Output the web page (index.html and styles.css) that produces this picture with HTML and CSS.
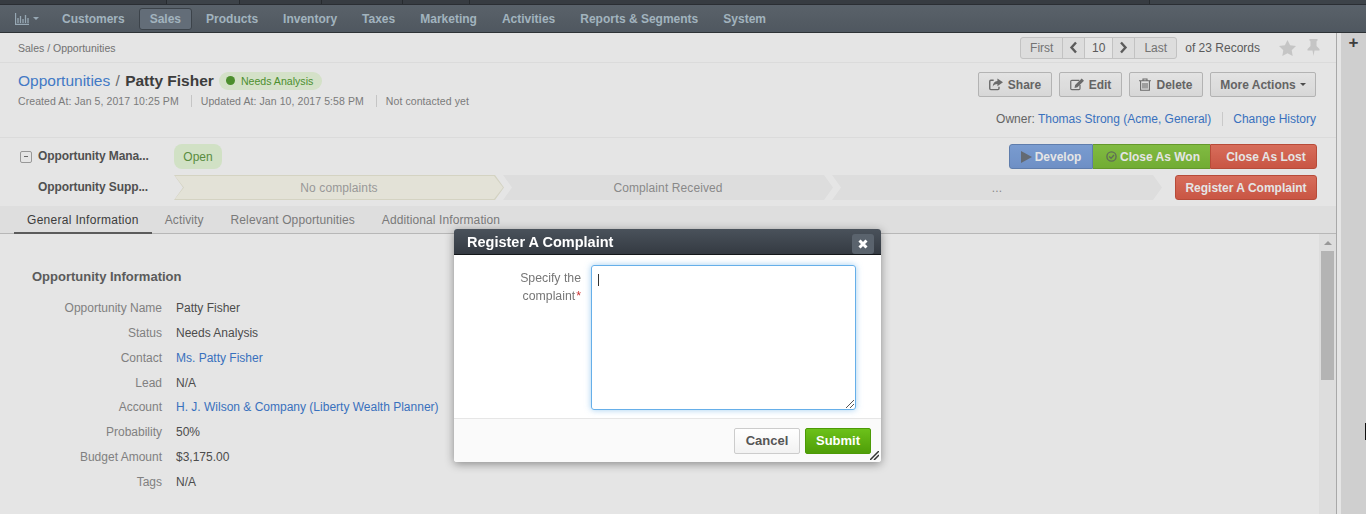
FILE: index.html
```html
<!DOCTYPE html>
<html lang="en">
  <head>
    <meta charset="UTF-8" />
    <title>Opportunities - Patty Fisher</title>
    <link rel="stylesheet" href="styles.css">
  </head>
  <body>
    <div class="tabstrip">
      <span class="strip-tab s1"></span><span class="strip-tab s2"></span><span class="strip-tab s3"></span><span class="strip-tab s4"></span><span class="strip-tab s5"></span><span class="strip-tab s6"></span>
    </div>
    <nav class="topnav">
      <a class="nav-chart">
        <svg width="14" height="12" viewBox="0 0 14 12"><path d="M.5 0v11.500H14M3 5v5M5.500 3v7M8 6v4M10.500 2v8M13 5v5" fill="none" stroke="#a9bcc9" stroke-width="1.300"/></svg>
        <i class="caret"></i>
      </a>
      <a class="nav-item">Customers</a>
      <a class="nav-item active">Sales</a>
      <a class="nav-item">Products</a>
      <a class="nav-item">Inventory</a>
      <a class="nav-item">Taxes</a>
      <a class="nav-item">Marketing</a>
      <a class="nav-item">Activities</a>
      <a class="nav-item">Reports &amp; Segments</a>
      <a class="nav-item">System</a>
    </nav>
    <div class="layout">
      <main class="content">
        <div class="crumbbar">
          <div class="crumbs">Sales / Opportunities</div>
          <div class="pager">
            <div class="pager-group">
              <span class="pg pg-text">First</span>
              <span class="pg pg-icon"><svg width="9" height="13" viewBox="0 0 9 13"><path d="M7 1.500 2.500 6.500 7 11.500" fill="none" stroke="#666" stroke-width="2.400"/></svg></span>
              <span class="pg pg-num">10</span>
              <span class="pg pg-icon"><svg width="9" height="13" viewBox="0 0 9 13"><path d="M2 1.500 6.500 6.500 2 11.500" fill="none" stroke="#666" stroke-width="2.400"/></svg></span>
              <span class="pg pg-text">Last</span>
            </div>
            <span class="records">of 23 Records</span>
            <svg class="star" width="17" height="16" viewBox="0 0 17 16"><path d="M8.500 0l2.600 5.300 5.900.8-4.300 4.100 1 5.800-5.200-2.800L3.300 16l1-5.800L0 6.100l5.900-.8z" fill="#dcdcdc"/></svg>
            <svg class="pin" width="13" height="17" viewBox="0 0 13 17"><path d="M2.500 0h8v1.500L9.500 2.500V7l3 3v1.500H7.500L6.500 17l-1-5.500H.5V10l3-3V2.500l-1-1z" fill="#dcdcdc"/></svg>
          </div>
        </div>

        <header class="head">
          <div class="head-left">
            <div class="title-row">
              <h1 class="title"><a class="link">Opportunities</a> <span class="slash">/</span> <b>Patty Fisher</b></h1>
              <span class="status"><i class="dot"></i>Needs Analysis</span>
            </div>
            <div class="meta">
              <span>Created At: Jan 5, 2017 10:25 PM</span>
              <span>Updated At: Jan 10, 2017 5:58 PM</span>
              <span>Not contacted yet</span>
            </div>
          </div>
          <div class="head-right">
            <div class="actions">
              <button class="btn btn-share">
                <svg width="14" height="13" viewBox="0 0 15 13"><path d="M5 2H2a1.200 1.200 0 0 0-1.200 1.200v7.600A1.200 1.200 0 0 0 2 12h7.500a1.200 1.200 0 0 0 1.200-1.200V9" fill="none" stroke="#777" stroke-width="1.500"/><path d="M9 0l6 4.200-6 4.200V6C6.500 6 4.800 7 4 9c0-4 2-6 5-6.300z" fill="#777"/></svg>
                Share
              </button>
              <button class="btn btn-edit">
                <svg width="14" height="13" viewBox="0 0 15 13"><path d="M10 2H2a1.200 1.200 0 0 0-1.200 1.200v7.600A1.200 1.200 0 0 0 2 12h7.500a1.200 1.200 0 0 0 1.200-1.200V7" fill="none" stroke="#777" stroke-width="1.300"/><path d="M12.500 0 15 2.500 8 9.500l-3.200.7.700-3.200z" fill="#777"/></svg>
                Edit
              </button>
              <button class="btn btn-delete">
                <svg width="12" height="13" viewBox="0 0 12 13"><path d="M0 2.800h12M4 2.500V1h4v1.500M1.600 3v9.300h8.800V3M4 5v5.500M6 5v5.500M8 5v5.500" fill="none" stroke="#777" stroke-width="1.100"/></svg>
                Delete
              </button>
              <button class="btn btn-more">More Actions <i class="caret dark"></i></button>
            </div>
            <div class="owner">
              <span>Owner: <a class="link">Thomas Strong (Acme, General)</a></span>
              <a class="link history">Change History</a>
            </div>
          </div>
        </header>

        <section class="stages">
          <div class="stage-row">
            <span class="toggle"></span>
            <span class="stage-name">Opportunity Mana...</span>
            <div class="stage-main"><span class="open-pill">Open</span></div>
            <div class="btn-group">
              <button class="fill blue"><svg width="11" height="12" viewBox="0 0 11 12"><path d="M0 0l11 6-11 6z" fill="#6f7680"/></svg>Develop</button>
              <button class="fill green"><svg width="11" height="11" viewBox="0 0 12 12"><circle cx="6" cy="6" r="5" fill="none" stroke="#6a7a60" stroke-width="1.500"/><path d="M3.500 6l2 2 3.200-3.600" fill="none" stroke="#6a7a60" stroke-width="1.500"/></svg>Close As Won</button>
              <button class="fill red">Close As Lost</button>
            </div>
          </div>
          <div class="stage-row second">
            <span class="toggle blank"></span>
            <span class="stage-name">Opportunity Supp...</span>
            <div class="stage-main chevrons">
              <div class="chev current">No complaints</div>
              <div class="chev">Complaint Received</div>
              <div class="chev">...</div>
            </div>
            <button class="fill red single">Register A Complaint</button>
          </div>
        </section>

        <div class="tabs">
          <a class="tab active">General Information</a>
          <a class="tab">Activity</a>
          <a class="tab">Relevant Opportunities</a>
          <a class="tab">Additional Information</a>
        </div>

        <div class="panel">
          <div class="details">
            <h2 class="section-title">Opportunity Information</h2>
            <dl class="fields">
              <dt>Opportunity Name</dt><dd>Patty Fisher</dd>
              <dt>Status</dt><dd>Needs Analysis</dd>
              <dt>Contact</dt><dd><a class="link">Ms. Patty Fisher</a></dd>
              <dt>Lead</dt><dd>N/A</dd>
              <dt>Account</dt><dd><a class="link">H. J. Wilson &amp; Company (Liberty Wealth Planner)</a></dd>
              <dt>Probability</dt><dd>50%</dd>
              <dt>Budget Amount</dt><dd>$3,175.00</dd>
              <dt>Tags</dt><dd>N/A</dd>
            </dl>
          </div>
          <div class="scrollbar">
            <i class="arrow"></i>
            <div class="thumb"></div>
          </div>
        </div>
      </main>
      <aside class="rail"><span class="plus">+</span></aside>
    </div>

    <div class="overlay"></div>
    <div class="modal">
      <div class="modal-head">
        <span class="modal-title">Register A Complaint</span>
        <span class="modal-close"><svg width="10" height="10" viewBox="0 0 10 10"><path d="M1.500 1.500l7 7M8.500 1.500l-7 7" stroke="#fff" stroke-width="3"/></svg></span>
      </div>
      <div class="modal-body">
        <label class="modal-label">Specify the complaint<em>*</em></label>
        <div class="textarea"><i class="cursor"></i><svg class="grip" width="8" height="8" viewBox="0 0 8 8"><path d="M0 8l8-8M4 8l4-4" stroke="#555" stroke-width="1"/></svg></div>
      </div>
      <div class="modal-foot">
        <button class="cancel">Cancel</button>
        <button class="submit">Submit</button>
        <svg class="modal-grip" width="9" height="9" viewBox="0 0 9 9"><path d="M0 9l9-9M4 9l5-5" stroke="#333" stroke-width="1.500"/></svg>
      </div>
    </div>
    <i class="mouse-mark"></i>
  </body>
</html>
```

FILE: styles.css
```css
* {
  box-sizing: border-box;
}
html,
body {
  height: 100%;
}
body {
  margin: 0;
  font-family: "Liberation Sans", Arial, sans-serif;
  font-size: 12px;
  color: #555;
  background: #fff;
  overflow: hidden;
}
.link {
  color: #3f7ed4;
  text-decoration: none;
}
button {
  font-family: inherit;
  cursor: pointer;
}

/* top strip of browser-ish tabs */
.tabstrip {
  display: flex;
  height: 5px;
  background: #454b52;
  border-bottom: 1px solid #2f3439;
}
.strip-tab {
  height: 4px;
  background: #3e434a;
  border-right: 1px solid #2c3035;
}
.s1 { width: 167px; }
.s2 { width: 73px; background: #454b52; }
.s3 { width: 82px; }
.s4 { width: 81px; }
.s5 { width: 67px; }
.s6 { width: 680px; }

.topnav {
  display: flex;
  align-items: center;
  height: 28px;
  padding-left: 15px;
  background: linear-gradient(#646d76, #59626b);
  border-bottom: 1px solid #33383d;
}
.nav-chart {
  display: flex;
  align-items: center;
  gap: 4px;
  width: 32px;
}
.caret {
  display: inline-block;
  width: 0;
  height: 0;
  border-left: 3px solid transparent;
  border-right: 3px solid transparent;
  border-top: 3px solid #a9bcc9;
  vertical-align: middle;
}
.caret.dark {
  border-top-color: #555;
  margin-left: -1px;
}
.nav-item {
  padding: 3px 10px;
  margin-right: 3px;
  height: 22px;
  font-size: 12px;
  line-height: 15px;
  font-weight: bold;
  color: #b5c8d4;
  border: 1px solid transparent;
  border-radius: 3px;
}
.nav-chart + .nav-item {
  margin-left: 4px;
}
.nav-item.active {
  background: #6f7a86;
  border-color: #434b53;
}

.layout {
  display: flex;
  height: 481px;
}
.content {
  flex: 1;
  min-width: 0;
  background: #fff;
  border-right: 1px solid #bbb;
  display: flex;
  flex-direction: column;
}
.rail {
  width: 29px;
  background: #e7e7e7;
  text-align: center;
  border-left: 4px solid #fff;
}
.plus {
  font-size: 17px;
  line-height: 20px;
  font-weight: bold;
  color: #444;
}

.crumbbar {
  display: flex;
  justify-content: space-between;
  align-items: center;
  height: 30px;
  padding: 0 16px 0 18px;
  border-bottom: 1px solid #f4f4f4;
}
.crumbs {
  font-size: 10.500px;
  color: #808080;
}
.pager {
  display: flex;
  align-items: center;
}
.pager-group {
  display: flex;
  height: 22px;
  border: 1px solid #d8d8d8;
  border-radius: 3px;
  background: #f6f6f6;
}
.pg {
  display: flex;
  align-items: center;
  justify-content: center;
  font-size: 12px;
  color: #808080;
  border-right: 1px solid #d8d8d8;
}
.pg:last-child {
  border-right: 0;
}
.pg-text {
  width: 42px;
}
.pg-text:last-child {
  width: 41px;
}
.pg-icon {
  width: 22px;
}
.pg-num {
  width: 28px;
  background: #fff;
  color: #666;
}
.records {
  font-size: 12px;
  color: #666;
  margin-left: 8px;
  margin-right: 19px;
}
.pin {
  margin-left: 11px;
}

.head {
  display: flex;
  justify-content: space-between;
  height: 75px;
  padding: 8px 20px 0 18px;
  border-bottom: 1px solid #f4f4f4;
}
.title-row {
  display: flex;
  align-items: center;
  height: 20px;
}
.title {
  margin: 0;
  font-size: 15.500px;
  font-weight: normal;
  white-space: nowrap;
}
.title .link {
  color: #4a88dc;
}
.title b {
  color: #444;
}
.slash {
  color: #777;
  margin: 0 1px;
}
.status {
  display: flex;
  align-items: center;
  height: 18px;
  margin-left: 5px;
  padding: 0 9px 0 7px;
  border-radius: 9px;
  background: #ecfbdf;
  color: #559f33;
  font-size: 10.600px;
}
.dot {
  width: 9px;
  height: 9px;
  margin-right: 6px;
  margin-top: -2px;
  border-radius: 50%;
  background: #559f33;
}
.meta {
  display: flex;
  margin-top: 4px;
  font-size: 10.500px;
  letter-spacing: 0.08px;
  color: #8a8a8a;
}
.meta span {
  padding-right: 12px;
  margin-right: 9px;
  border-right: 1px solid #dcdcdc;
}
.meta span:last-child {
  border-right: 0;
}
.head-right {
  display: flex;
  flex-direction: column;
  align-items: flex-end;
}
.actions {
  display: flex;
  gap: 7px;
  margin-top: 1px;
}
.btn {
  display: flex;
  align-items: center;
  justify-content: center;
  gap: 5px;
  height: 25px;
  padding: 0;
  font-size: 12px;
  font-weight: bold;
  color: #707070;
  border: 1px solid #c8c8c8;
  border-radius: 2px;
  background: linear-gradient(#fdfdfd, #f0f0f0);
}
.btn-share { width: 74px; }
.btn-edit { width: 63px; }
.btn-delete { width: 74px; }
.btn-more { width: 106px; }
.owner {
  display: flex;
  margin-top: 15px;
  font-size: 12px;
  color: #707070;
}
.history {
  margin-left: 11px;
  padding-left: 10px;
  border-left: 1px solid #e0e0e0;
}

.stages {
  height: 68px;
  padding: 6px 19px 0 20px;
}
.stage-row {
  display: flex;
  align-items: center;
  height: 25px;
}
.stage-row.second {
  margin-top: 6px;
}
.toggle {
  position: relative;
  width: 12px;
  height: 12px;
  margin-right: 6px;
  border: 1px solid #aaa;
  border-radius: 2px;
  background: #fff;
}
.toggle::after {
  content: "";
  position: absolute;
  left: 3px;
  top: 4px;
  width: 4px;
  height: 1px;
  background: #777;
}
.toggle.blank {
  visibility: hidden;
}
.stage-name {
  width: 136px;
  padding-bottom: 2px;
  font-size: 12px;
  font-weight: bold;
  letter-spacing: -0.1px;
  color: #5a5a5a;
  white-space: nowrap;
}
.stage-main {
  flex: 1;
}
.open-pill {
  display: inline-block;
  width: 48px;
  height: 25px;
  text-align: center;
  line-height: 26px;
  border-radius: 8px;
  background: #e9fbdc;
  color: #659c48;
  font-size: 12px;
}
.chevrons {
  display: flex;
  height: 25px;
}
.chev {
  position: relative;
  isolation: isolate;
  width: 330px;
  height: 25px;
  margin-right: -1px;
  line-height: 26px;
  text-align: center;
  font-size: 12px;
  letter-spacing: 0.1px;
  color: #999;
  background: #f7f7f7;
  clip-path: polygon(0 0, calc(100% - 9px) 0, 100% 50%, calc(100% - 9px) 100%, 0 100%, 9px 50%);
}
.chev.current {
  background: #ecebd9;
  color: #aaa;
}
.chev.current::before {
  content: "";
  position: absolute;
  top: 1px;
  bottom: 1px;
  left: 1px;
  right: 1px;
  z-index: -1;
  background: #fdfcf0;
  clip-path: polygon(0 0, calc(100% - 9px) 0, 100% 50%, calc(100% - 9px) 100%, 0 100%, 9px 50%);
}
.btn-group {
  display: flex;
}
.fill {
  display: flex;
  align-items: center;
  justify-content: center;
  gap: 3px;
  height: 25px;
  font-size: 12px;
  font-weight: bold;
  color: #fff;
  border: 1px solid;
  padding: 0;
}
.blue {
  width: 84px;
  background: linear-gradient(#88aee8, #7ba0dc);
  border-color: #6a8cc0;
  border-radius: 3px 0 0 3px;
}
.green {
  width: 117px;
  padding-left: 3px;
  background: linear-gradient(#90d04a, #7fc03a);
  border-color: #70aa30;
  border-width: 1px 0;
}
.red {
  background: linear-gradient(#f07a66, #e0604c);
  border-color: #cc5440;
}
.btn-group .red {
  width: 107px;
  padding-left: 5px;
  border-radius: 0 3px 3px 0;
}
.red.single {
  width: 142px;
  border-radius: 3px;
}

.tabs {
  display: flex;
  height: 28px;
  padding-left: 14px;
  background: #f8f8f8;
  border-bottom: 1px solid #ccc;
}
.tab {
  height: 28px;
  padding: 7px 13px 0;
  margin-right: 1px;
  font-size: 12px;
  letter-spacing: 0.1px;
  color: #888;
}
.tab.active {
  margin-right: 0;
  letter-spacing: 0.3px;
  color: #444;
  border-bottom: 2px solid #666;
}

.panel {
  flex: 1;
  min-height: 0;
  display: flex;
  justify-content: space-between;
  background: #fff;
}
.details {
  padding: 35px 0 0 32px;
}
.section-title {
  margin: 0 0 16px;
  font-size: 13px;
  line-height: 16px;
  font-weight: bold;
  color: #666;
}
.fields {
  display: grid;
  grid-template-columns: 130px auto;
  grid-auto-rows: 24.860px;
  column-gap: 14px;
  margin: 0;
  font-size: 12px;
  line-height: 15px;
}
.fields dt {
  text-align: right;
  color: #8f8f8f;
}
.fields dd {
  margin: 0;
  color: #555;
}
.scrollbar {
  width: 17px;
  background: #f7f7f7;
}
.arrow {
  display: block;
  width: 0;
  margin: 7px auto 0;
  border-left: 4px solid transparent;
  border-right: 4px solid transparent;
  border-bottom: 4px solid #aaa;
}
.thumb {
  height: 129px;
  margin: 6px 2px 0;
  background: #c9c9c9;
}

/* modal */
.overlay {
  position: fixed;
  top: 0;
  left: 0;
  right: 0;
  bottom: 0;
  background: rgba(0, 0, 0, 0.1);
}
.modal {
  position: absolute;
  left: 454px;
  top: 229px;
  width: 427px;
  height: 233px;
  display: flex;
  flex-direction: column;
  background: #fff;
  border-radius: 3px;
  box-shadow: 0 2px 10px rgba(0, 0, 0, 0.4);
}
.modal-head {
  display: flex;
  align-items: center;
  justify-content: space-between;
  flex: none;
  height: 26px;
  padding: 0 7px 0 13px;
  background: linear-gradient(#4a525b, #343a42);
  border-bottom: 1px solid #14171a;
  border-radius: 3px 3px 0 0;
}
.modal-title {
  font-size: 14.500px;
  font-weight: bold;
  color: #fff;
}
.modal-close {
  display: flex;
  align-items: center;
  justify-content: center;
  width: 22px;
  height: 20px;
  margin-top: 4px;
  border-radius: 3px;
  background: #5a636d;
}
.modal-body {
  display: flex;
  flex: 1;
  padding: 10px 25px 0 0;
  border-bottom: 1px solid #e6e6e6;
}
.modal-label {
  width: 127px;
  padding: 4px 0 0 60px;
  text-align: right;
  font-size: 12.300px;
  line-height: 18px;
  color: #777;
}
.modal-label em {
  margin-left: 1px;
  color: #c33;
  font-style: normal;
}
.textarea {
  position: relative;
  width: 265px;
  height: 145px;
  margin-left: 10px;
  border: 1px solid #66afe9;
  border-radius: 3px;
  box-shadow: 0 0 6px rgba(102, 175, 233, 0.6);
}
.cursor {
  position: absolute;
  left: 6px;
  top: 8px;
  width: 1px;
  height: 12px;
  background: #333;
}
.grip {
  position: absolute;
  right: 1px;
  bottom: 1px;
}
.modal-foot {
  position: relative;
  display: flex;
  justify-content: flex-end;
  gap: 5px;
  flex: none;
  height: 43px;
  padding: 9px 10px 0 0;
  background: #fafafa;
  border-radius: 0 0 3px 3px;
}
.cancel,
.submit {
  width: 66px;
  height: 26px;
  padding: 0 0 2px;
  font-size: 13px;
  font-weight: bold;
  border-radius: 2px;
}
.cancel {
  color: #555;
  border: 1px solid #ccc;
  background: linear-gradient(#fff, #f2f2f2);
}
.submit {
  color: #fff;
  border: 1px solid #4c9a06;
  background: linear-gradient(#6cc11a, #4f9e08);
}
.modal-grip {
  position: absolute;
  right: 2px;
  bottom: 2px;
}
.mouse-mark {
  position: absolute;
  left: 1365px;
  top: 423px;
  width: 1px;
  height: 17px;
  background: #111;
}
```
